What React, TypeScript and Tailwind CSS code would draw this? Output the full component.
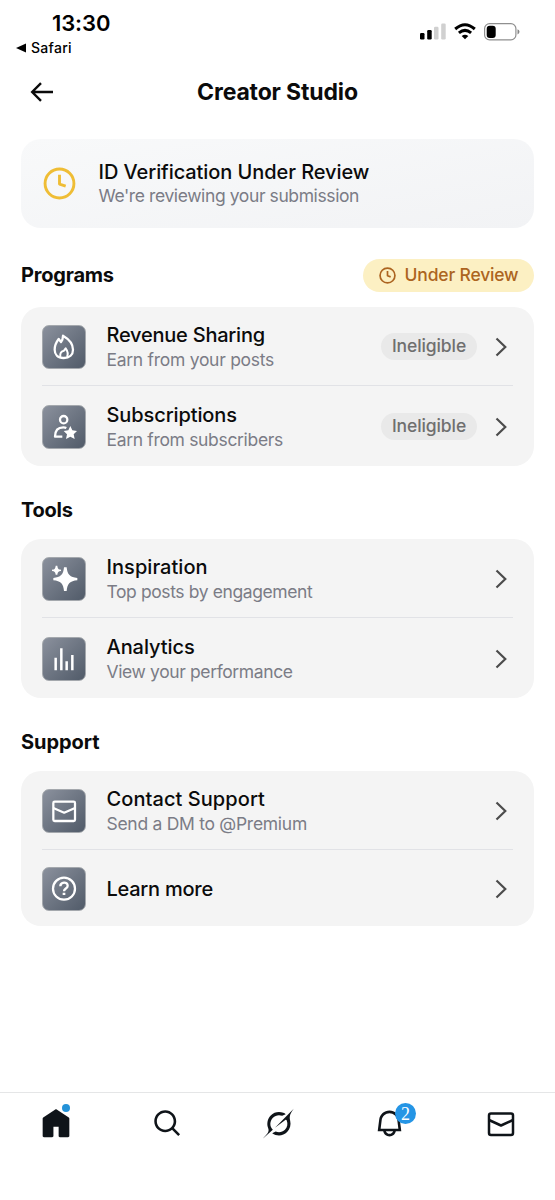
import type { ReactNode } from "react";

const stroke = {
  fill: "none",
  stroke: "currentColor",
  strokeWidth: 6.8,
  strokeLinejoin: "round" as const,
};

function Tile({ children }: { children: ReactNode }) {
  return (
    <div className="size-11 shrink-0 overflow-hidden rounded-[7px] border border-[#a4a8ad] bg-linear-to-br from-[#8b919d] to-[#515b69] text-white">
      <svg viewBox="3 3 126 126" className="size-full">
        {children}
      </svg>
    </div>
  );
}

const FlameIcon = () => (
  <g {...stroke}>
    <path d="M65 99C47 99 38 88 38 74C38 62 43 51 50 42L57 51Q63 43 63 32C82 43 93 58 93 74C93 89 83 99 65 99Z" />
    <path strokeWidth={6} d="M55 96C53 85 58 78 66 77L71 70C77 78 79 87 75 96" />
  </g>
);

const SubscriberIcon = () => (
  <>
    <g {...stroke}>
      <circle cx="65" cy="44" r="11" />
      <path d="M61 95H39C39 78 46 67 64 67Q69 67 73 69" />
    </g>
    <path
      fill="currentColor"
      d="M85 63L91 76L105 78L95 88L98 102L85 95L72 102L75 88L65 78L79 76Z"
    />
  </>
);

const SparkleIcon = () => (
  <g fill="currentColor">
    <path d="M66 31H74C76 53 84 61 106 63V70C84 72 76 80 74 102H66C64 80 56 72 34 70V63C56 61 64 53 66 31Z" />
    <path d="M41 26H46C47 35 49 37 57 38V42C49 43 47 45 46 53H41C40 45 38 43 30 42V38C38 37 40 35 41 26Z" />
  </g>
);

const BarsIcon = () => (
  <path {...stroke} strokeWidth={7.500} d="M41 62V100M58 34V100M74 73V100M91 54V100" />
);

const TileMailIcon = () => (
  <g {...stroke}>
    <rect x="34" y="38" width="65" height="58" rx="4" />
    <path d="M34 57L66.500 71L99 57" />
  </g>
);

const HelpIcon = () => (
  <g {...stroke}>
    <circle cx="66" cy="65" r="33" />
    <path strokeWidth={7} d="M55 58C55 44 77 43 77 56C77 65 66 64 66 73" />
    <path strokeWidth={8} d="M66 77V84" />
  </g>
);

const ClockIcon = ({ className, width }: { className: string; width: number }) => (
  <svg viewBox="0 0 32 32" className={className} fill="none" stroke="currentColor" strokeWidth={width}>
    <circle cx="16" cy="16" r="14" />
    <path d="M16 7.500V16.500L22 18.500" strokeLinejoin="round" />
  </svg>
);

const Chevron = () => (
  <svg viewBox="0 0 12 20" className="mr-[6px] ml-[18px] h-5 w-3 shrink-0 text-[#4c4c4c]">
    <path d="M1.500 1.500L10.300 10L1.500 18.500" fill="none" stroke="currentColor" strokeWidth="2.200" />
  </svg>
);

type RowProps = {
  icon: ReactNode;
  title: string;
  titleClass: string;
  sub?: string;
  subClass?: string;
  badge?: boolean;
  height: string;
};

function Row({ icon, title, titleClass, sub, subClass, badge, height }: RowProps) {
  return (
    <div className={`flex items-center pt-px ${height}`}>
      <Tile>{icon}</Tile>
      <div className={`ml-[20.500px] flex-1 whitespace-nowrap ${sub ? "pt-[2px]" : ""}`}>
        <div className={`text-[20px] leading-6 font-medium text-[#0b0b0b] ${titleClass}`}>{title}</div>
        {sub && <div className={`text-[17.500px] leading-[25px] text-[#7b7c86] ${subClass}`}>{sub}</div>}
      </div>
      {badge && (
        <span className="flex h-[27px] w-24 items-center justify-center rounded-full bg-[#e9e9e9] text-[17.500px] font-medium tracking-[-0.100px] text-[#6f6f6f]">
          Ineligible
        </span>
      )}
      <Chevron />
    </div>
  );
}

function Card({ children }: { children: ReactNode }) {
  return (
    <section className="mx-[21px] divide-y divide-[#e1e2e6] rounded-[20px] bg-[#f4f4f4] px-[21px]">
      {children}
    </section>
  );
}

function StatusBar() {
  return (
    <div className="flex h-[60px] justify-between pt-[10px] pr-[35px] pl-4 text-black">
      <div>
        <div className="pl-9 text-[22px] leading-[26px] font-semibold tracking-[-0.100px]">13:30</div>
        <div className="flex items-center gap-[5px] pt-0.5 text-[14px] leading-5 font-medium tracking-[0.300px]">
          <svg viewBox="0 0 10 10" className="size-[10px]">
            <path d="M0 5L10 .5V9.500Z" />
          </svg>
          Safari
        </div>
      </div>
      <div className="flex h-[17px] gap-2 pt-[13px]">
        <svg viewBox="0 0 26 17" className="h-[17px] w-[26px] shrink-0">
          <rect x="0" y="10" width="4.500" height="6.500" rx="1.200" />
          <rect x="7.200" y="7" width="4.500" height="9.500" rx="1.200" />
          <rect x="14" y="3.700" width="4.500" height="12.800" rx="1.200" fill="#d0d0d0" />
          <rect x="21.200" y="0.500" width="4.500" height="16" rx="1.200" fill="#d0d0d0" />
        </svg>
        <svg viewBox="0 0 22 17" className="h-[17px] w-[22px] shrink-0" fill="none" stroke="#000" strokeWidth="3">
          <path d="M1.200 6Q11-2.500 20.800 6M4.900 9.900Q11 4.800 17.100 9.900" />
          <path d="M11 16.200L7.700 12.900Q11 10.400 14.300 12.900Z" fill="#000" stroke="none" />
        </svg>
        <svg viewBox="0 0 36 18" className="h-[18px] w-9 shrink-0">
          <rect x=".6" y=".6" width="31.300" height="16.300" rx="5" fill="none" stroke="#8f8f8f" strokeWidth="1.200" />
          <rect x="2.700" y="2.700" width="9" height="12.200" rx="3" />
          <path d="M33.500 6.200Q35.500 7 35.500 8.800T33.500 11.400Z" fill="#858585" />
        </svg>
      </div>
    </div>
  );
}

function TabBar() {
  return (
    <nav className="mt-auto flex h-[108px] items-start justify-between border-t border-[#e5e6e7] pt-[15px] pr-[38px] pl-10 text-[#0f1419]">
      <div className="relative size-8">
        <svg viewBox="0 0 24 24" className="size-8" fill="currentColor">
          <path d="M21.591 7.146L12.520 1.157c-.316-.21-.724-.21-1.040 0l-9.071 5.990c-.26.173-.409.456-.409.757v13.183c0 .502.418.913.929.913H9.140c.51 0 .929-.41.929-.913v-7.075h3.909v7.075c0 .502.417.913.928.913h6.165c.511 0 .929-.41.929-.913V7.904c0-.301-.158-.584-.408-.758z" />
        </svg>
        <span className="absolute -top-[4px] left-[22px] size-2 rounded-full bg-[#2492d8]" />
      </div>
      <svg viewBox="0 0 24 24" className="size-[31px]" fill="currentColor">
        <path d="M10.250 3.750c-3.590 0-6.500 2.910-6.500 6.500s2.910 6.500 6.500 6.500c1.795 0 3.419-.726 4.596-1.904 1.178-1.177 1.904-2.801 1.904-4.596 0-3.590-2.910-6.500-6.500-6.500zm-8.500 6.500c0-4.694 3.806-8.500 8.500-8.500s8.500 3.806 8.500 8.500c0 1.986-.682 3.815-1.824 5.262l4.781 4.781-1.414 1.414-4.781-4.781c-1.447 1.142-3.276 1.824-5.262 1.824-4.694 0-8.500-3.806-8.500-8.500z" />
      </svg>
      <svg viewBox="0 0 33 32" className="h-[31px] w-[31px]" fill="currentColor">
        <path d="M12.745 20.540l10.970-8.190c.539-.4 1.307-.244 1.564.38 1.349 3.288.746 7.241-1.938 9.955-2.683 2.714-6.417 3.310-9.830 1.954l-3.728 1.745c5.347 3.697 11.840 2.782 15.898-1.324 3.219-3.255 4.216-7.692 3.284-11.693l.008.009c-1.351-5.878.332-8.227 3.782-13.031L33 0l-4.540 4.590v-.014L12.743 20.544m-2.263 1.987c-3.837-3.707-3.175-9.446.1-12.755 2.420-2.449 6.388-3.448 9.852-1.979l3.720-1.737c-.67-.49-1.530-1.017-2.515-1.387-4.455-1.854-9.789-.931-13.410 2.728-3.483 3.523-4.579 8.940-2.697 13.561 1.405 3.454-.899 5.898-3.220 8.364C1.490 30.200.666 31.074 0 32l10.478-9.466" />
      </svg>
      <div className="relative size-[31px]">
        <svg viewBox="0 0 24 24" className="size-[31px]" fill="currentColor">
          <path d="M19.993 9.042C19.480 5.017 16.054 2 11.996 2s-7.490 3.021-7.999 7.051L2.866 18H7.100c.463 2.282 2.481 4 4.900 4s4.437-1.718 4.900-4h4.236l-1.143-8.958zM12 20c-1.306 0-2.417-.835-2.829-2h5.658c-.412 1.165-1.523 2-2.829 2zm-6.866-4l.847-6.698C6.364 6.272 8.941 4 11.996 4s5.627 2.268 6.013 5.295L18.864 16H5.134z" />
        </svg>
        <span className="absolute -top-[5px] left-[21px] flex size-[21px] items-center justify-center rounded-full bg-[#2595e5] font-['Liberation_Serif',serif] text-[18px] leading-none text-white">
          2
        </span>
      </div>
      <svg viewBox="0 0 32 32" className="size-8" fill="none" stroke="currentColor" strokeWidth="2.500" strokeLinejoin="round">
        <rect x="4" y="5.500" width="24" height="21.500" rx="2" />
        <path d="M4 12L16 17.500L28 12" />
      </svg>
    </nav>
  );
}

export default function App() {
  return (
    <main className="flex h-[1200px] w-[555px] flex-col bg-white font-['Inter',sans-serif] text-[#0b0b0b]">
      <StatusBar />
      <header className="grid h-16 grid-cols-[80px_1fr_80px] items-center">
        <svg viewBox="0 0 24 20" className="ml-[30px] h-5 w-6" fill="none" stroke="currentColor" strokeWidth="2.400">
          <path d="M23 10H2.200M11 1.200L2.200 10L11 18.800" />
        </svg>
        <h1 className="text-center text-[23px] font-bold tracking-[-0.150px] whitespace-nowrap">Creator Studio</h1>
      </header>

      <section className="mx-[21px] mt-[15px] flex h-[89px] items-center rounded-[20px] bg-linear-to-br from-[#f8f9fa] to-[#f2f3f5] pl-[22px]">
        <ClockIcon className="size-[33px] text-[#efbd35]" width={2.8} />
        <div className="ml-[22.500px] pt-px whitespace-nowrap">
          <div className="text-[20px] leading-6 font-medium tracking-[-0.070px]">ID Verification Under Review</div>
          <div className="text-[17.500px] leading-6 tracking-[-0.400px] text-[#7b7c86]">We're reviewing your submission</div>
        </div>
      </section>

      <div className="mx-[21px] mt-[31px] mb-4 flex h-8 items-center justify-between">
        <h2 className="text-[20px] font-bold tracking-[-0.200px]">Programs</h2>
        <span className="flex h-[33px] w-[171px] items-center justify-center gap-[9px] rounded-full bg-[#fcf0c3] text-[17.500px] font-medium tracking-[-0.180px] whitespace-nowrap text-[#ac6420]">
          <ClockIcon className="size-[17px]" width={3.2} />
          Under Review
        </span>
      </div>
      <Card>
        <Row height="h-[79px]" icon={<FlameIcon />} title="Revenue Sharing" titleClass="tracking-[-0.230px]" sub="Earn from your posts" subClass="tracking-[-0.280px]" badge />
        <Row height="h-20" icon={<SubscriberIcon />} title="Subscriptions" titleClass="tracking-[-0.100px]" sub="Earn from subscribers" subClass="tracking-[-0.330px]" badge />
      </Card>

      <h2 className="mt-[29px] mb-[14px] ml-[21px] text-[20px] leading-[30px] font-bold tracking-[-0.250px]">Tools</h2>
      <Card>
        <Row height="h-[79px]" icon={<SparkleIcon />} title="Inspiration" titleClass="tracking-[0.050px]" sub="Top posts by engagement" subClass="tracking-[-0.400px]" />
        <Row height="h-20" icon={<BarsIcon />} title="Analytics" titleClass="tracking-[-0.050px]" sub="View your performance" subClass="tracking-[-0.380px]" />
      </Card>

      <h2 className="mt-[29px] mb-[14px] ml-[21px] text-[20px] leading-[30px] font-bold tracking-[-0.050px]">Support</h2>
      <Card>
        <Row height="h-[79px]" icon={<TileMailIcon />} title="Contact Support" titleClass="tracking-[0.070px]" sub="Send a DM to @Premium" subClass="tracking-[-0.280px]" />
        <Row height="h-[76px]" icon={<HelpIcon />} title="Learn more" titleClass="tracking-[-0.250px]" />
      </Card>

      <TabBar />
    </main>
  );
}
